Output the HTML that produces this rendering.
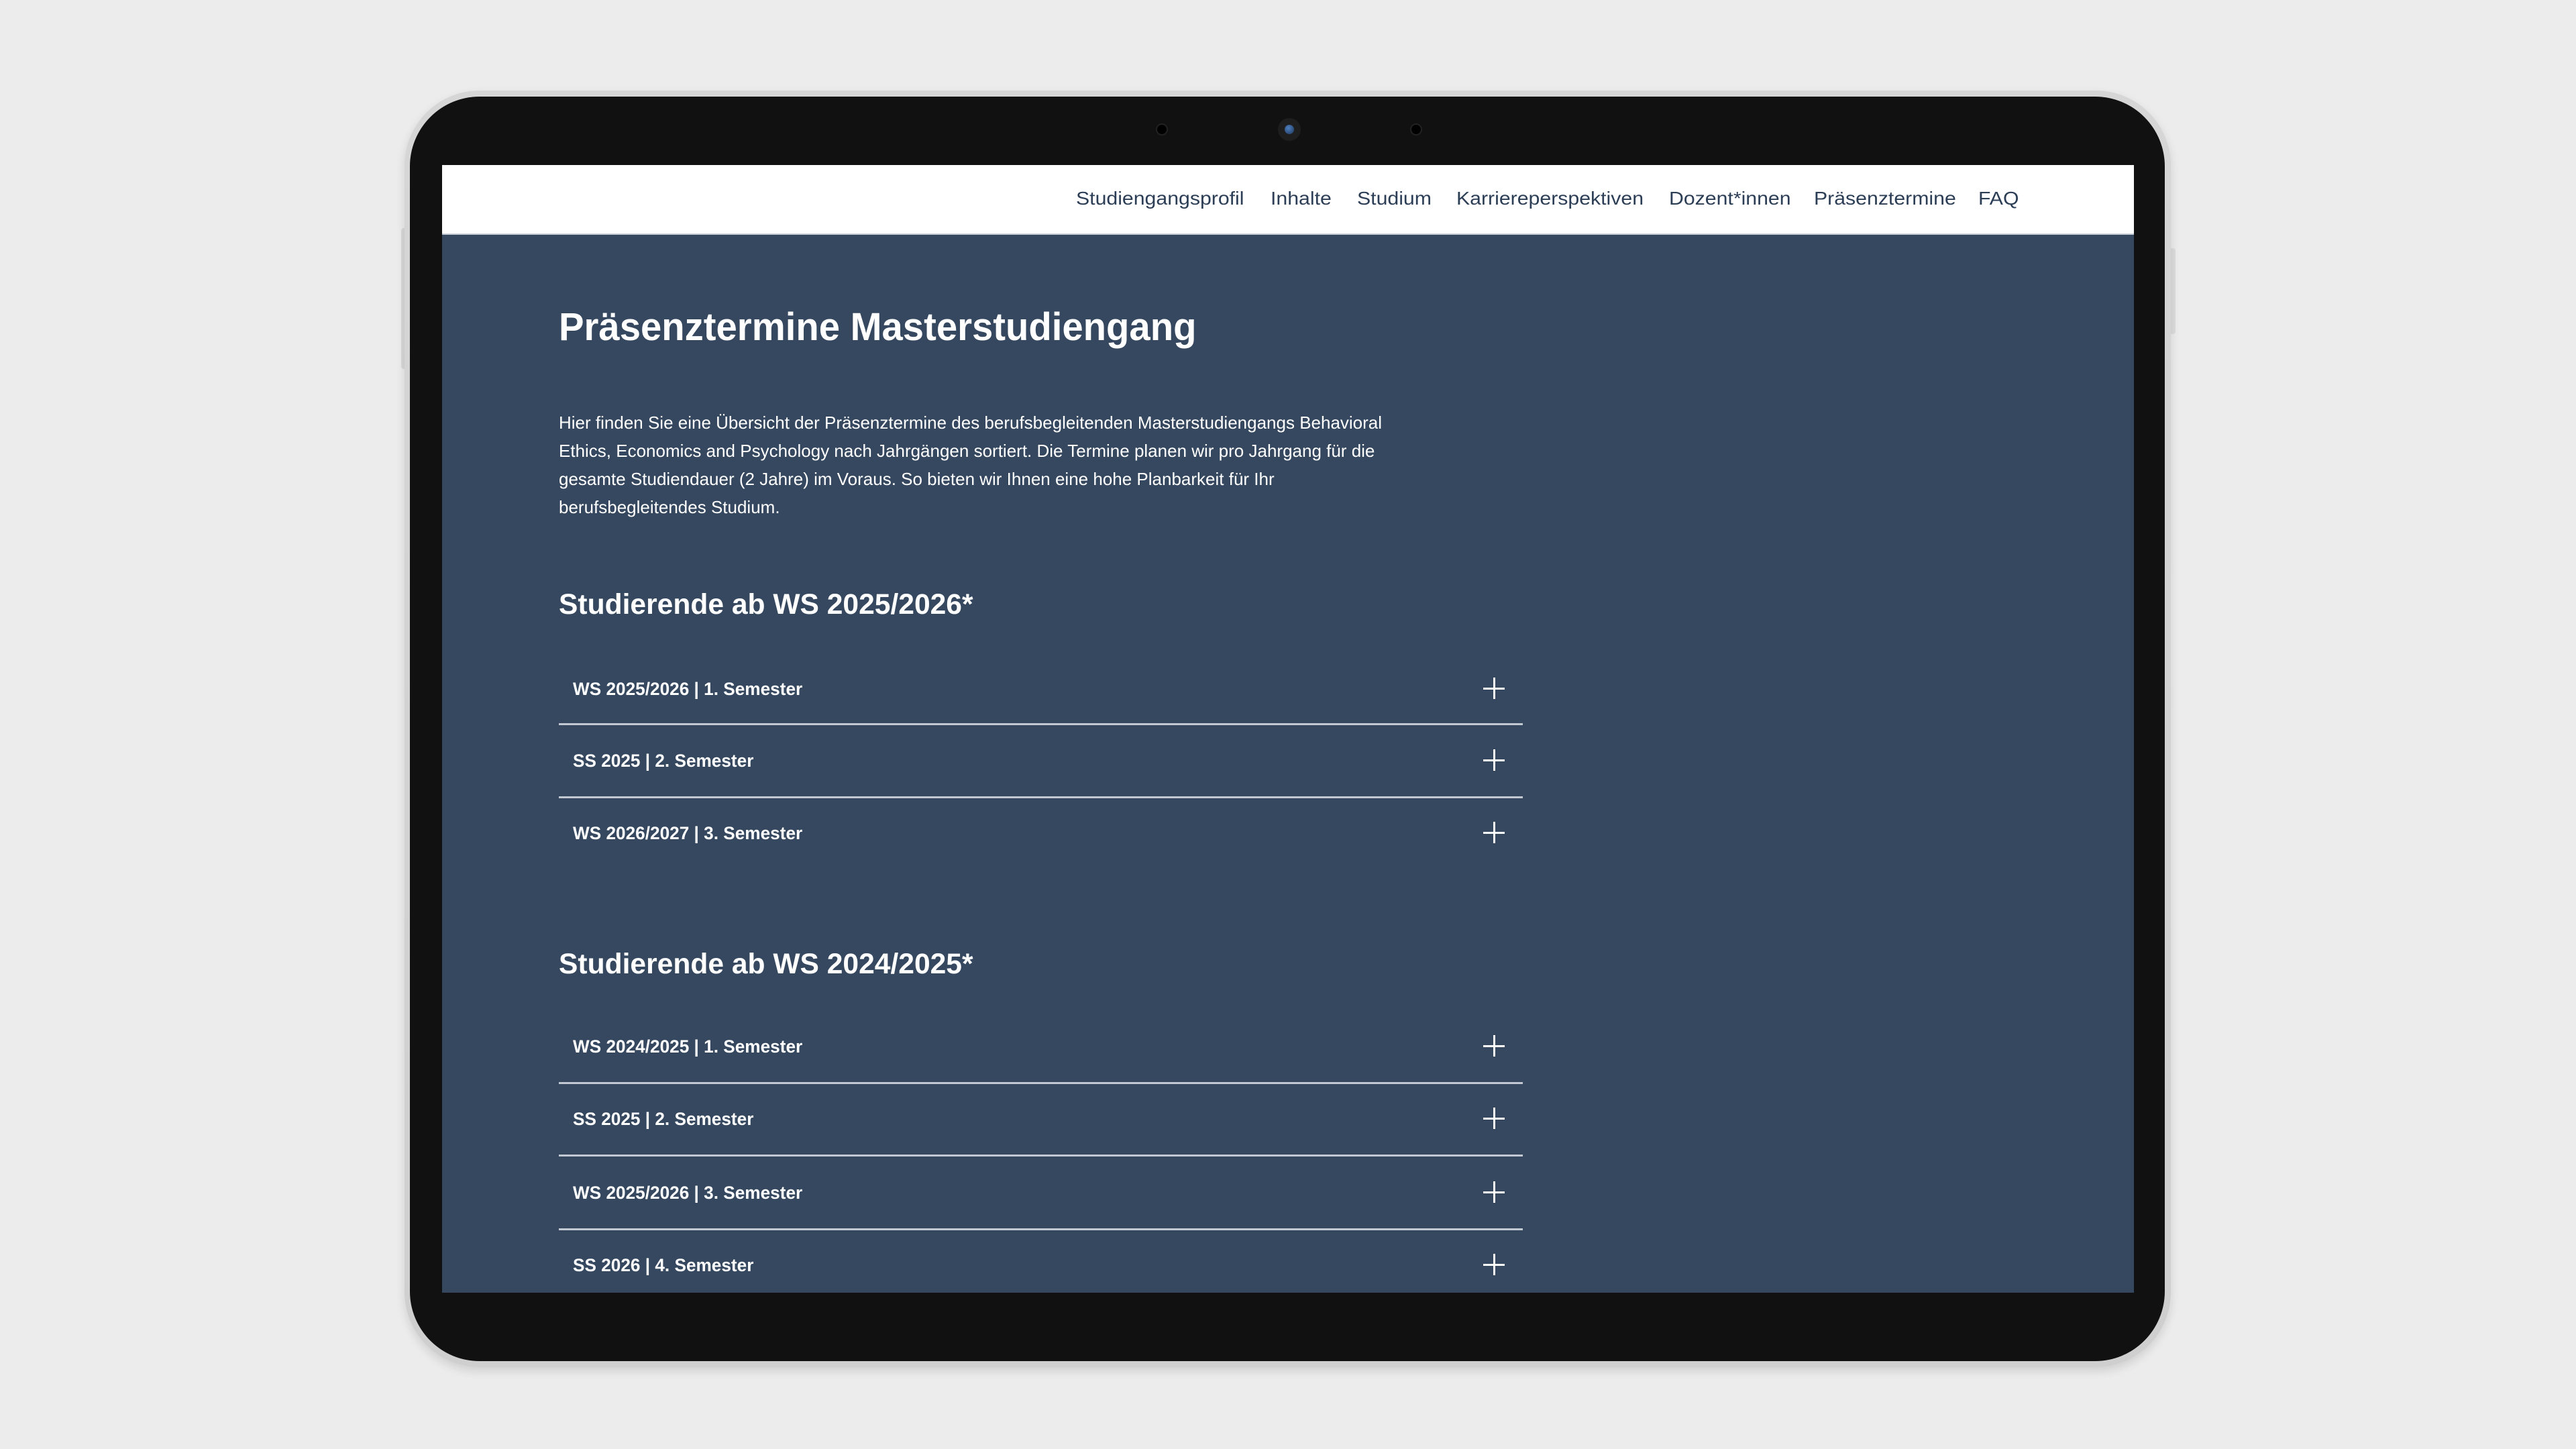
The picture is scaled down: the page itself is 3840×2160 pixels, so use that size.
<!DOCTYPE html>
<html><head><meta charset="utf-8">
<style>
*{margin:0;padding:0;box-sizing:border-box}
html,body{width:3840px;height:2160px;overflow:hidden;background:#ececec;font-family:"Liberation Sans",sans-serif}
.abs{position:absolute}
.silver{left:603px;top:135px;width:2633px;height:1903px;border-radius:112px;background:linear-gradient(#d6d6d6,#cfcfcf);box-shadow:0 6px 14px rgba(0,0,0,.12)}
.black{left:611px;top:144px;width:2616px;height:1885px;border-radius:104px;background:#111}
.screen{left:659px;top:246px;width:2522px;height:1681px;background:#35485f;overflow:hidden}
.nav{left:0;top:0;width:2522px;height:104px;background:#fff;border-bottom:2px solid #c9ced6}
.nav span{position:absolute;top:34px;font-size:28px;color:#2c3d56;white-space:nowrap;transform-origin:left center;transform:scaleX(1.08)}
h1{position:absolute;left:174px;top:208px;font-size:58px;font-weight:bold;color:#fff;white-space:nowrap;transform:scaleX(.97);transform-origin:left}
.p{position:absolute;left:174px;font-size:26px;color:#fff;white-space:nowrap;transform:scaleX(1.0);transform-origin:left;line-height:42px}
h2{position:absolute;left:174px;font-size:43px;font-weight:bold;color:#fff;white-space:nowrap;transform:scaleX(.99);transform-origin:left}
.row{position:absolute;left:174px;width:1437px;height:109px}
.row .t{position:absolute;left:21px;top:50%;margin-top:-17px;font-size:27px;line-height:32px;font-weight:bold;color:#fff;white-space:nowrap;transform:scaleX(.97);transform-origin:left}
.row .pl{position:absolute;left:1378px;top:50%;width:32px;height:32px;margin-top:-18px}
.row .pl:before{content:"";position:absolute;left:15px;top:0;width:3px;height:32px;background:#fff}
.row .pl:after{content:"";position:absolute;left:0;top:15px;width:32px;height:3px;background:#fff}
.line{position:absolute;left:174px;width:1437px;height:3px;background:#c3c9d2}
</style></head><body>
<div class="abs" style="left:598px;top:340px;width:8px;height:210px;background:#d8d8d8;border-radius:4px"></div>
<div class="abs" style="left:3234px;top:370px;width:9px;height:128px;background:#dcdcdc;border-radius:4px"></div>
<div class="abs silver"></div>
<div class="abs black"></div>
<div class="abs" style="left:1725px;top:186px;width:14px;height:14px;border-radius:50%;background:#000;box-shadow:0 0 0 2px #222"></div>
<div class="abs" style="left:2104px;top:186px;width:14px;height:14px;border-radius:50%;background:#000;box-shadow:0 0 0 2px #222"></div>
<div class="abs" style="left:1905px;top:176px;width:34px;height:34px;border-radius:50%;background:#1e1e1e"></div>
<div class="abs" style="left:1915px;top:186px;width:14px;height:14px;border-radius:50%;background:radial-gradient(circle at 40% 35%,#4f7fc0,#1d3558)"></div>
<div class="abs screen">
 <div class="abs nav">
  <span style="left:945px">Studiengangsprofil</span>
  <span style="left:1235px">Inhalte</span>
  <span style="left:1364px">Studium</span>
  <span style="left:1512px">Karriereperspektiven</span>
  <span style="left:1829px">Dozent*innen</span>
  <span style="left:2045px">Präsenztermine</span>
  <span style="left:2290px">FAQ</span>
 </div>
 <h1>Präsenztermine Masterstudiengang</h1>
 <div class="p" style="top:363px">Hier finden Sie eine Übersicht der Präsenztermine des berufsbegleitenden Masterstudiengangs Behavioral</div>
 <div class="p" style="top:405px">Ethics, Economics and Psychology nach Jahrgängen sortiert. Die Termine planen wir pro Jahrgang für die</div>
 <div class="p" style="top:447px">gesamte Studiendauer (2 Jahre) im Voraus. So bieten wir Ihnen eine hohe Planbarkeit für Ihr</div>
 <div class="p" style="top:489px">berufsbegleitendes Studium.</div>

 <h2 style="top:631px">Studierende ab WS 2025/2026*</h2>
 <div class="row" style="top:727px"><div class="t">WS 2025/2026 | 1. Semester</div><div class="pl"></div></div>
 <div class="line" style="top:832px"></div>
 <div class="row" style="top:834px"><div class="t">SS 2025 | 2. Semester</div><div class="pl"></div></div>
 <div class="line" style="top:941px"></div>
 <div class="row" style="top:942px"><div class="t">WS 2026/2027 | 3. Semester</div><div class="pl"></div></div>

 <h2 style="top:1167px">Studierende ab WS 2024/2025*</h2>
 <div class="row" style="top:1260px"><div class="t">WS 2024/2025 | 1. Semester</div><div class="pl"></div></div>
 <div class="line" style="top:1367px"></div>
 <div class="row" style="top:1368px"><div class="t">SS 2025 | 2. Semester</div><div class="pl"></div></div>
 <div class="line" style="top:1475px"></div>
 <div class="row" style="top:1478px"><div class="t">WS 2025/2026 | 3. Semester</div><div class="pl"></div></div>
 <div class="line" style="top:1585px"></div>
 <div class="row" style="top:1586px"><div class="t">SS 2026 | 4. Semester</div><div class="pl"></div></div>
</div>
</body></html>
